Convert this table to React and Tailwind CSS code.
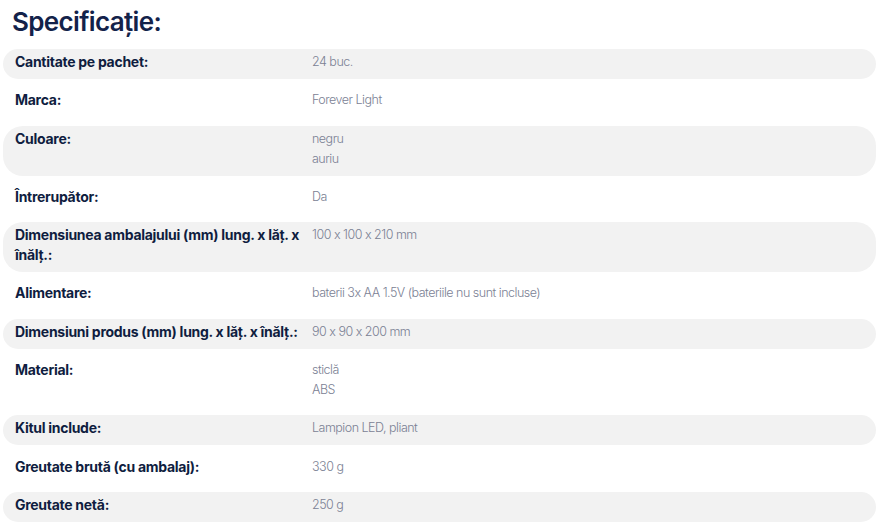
const specs = [
  { label: "Cantitate pe pachet:", values: ["24 buc."] },
  { label: "Marca:", values: ["Forever Light"] },
  { label: "Culoare:", values: ["negru", "auriu"] },
  { label: "Întrerupător:", values: ["Da"] },
  { label: "Dimensiunea ambalajului (mm) lung. x lăț. x înălț.:", values: ["100 x 100 x 210 mm"] },
  { label: "Alimentare:", values: ["baterii 3x AA 1.5V (bateriile nu sunt incluse)"] },
  { label: "Dimensiuni produs (mm) lung. x lăț. x înălț.:", values: ["90 x 90 x 200 mm"] },
  { label: "Material:", values: ["sticlă", "ABS"] },
  { label: "Kitul include:", values: ["Lampion LED, pliant"] },
  { label: "Greutate brută (cu ambalaj):", values: ["330 g"] },
  { label: "Greutate netă:", values: ["250 g"] },
]

export default function App() {
  return (
    <div className="w-[885px] h-[529px] bg-white overflow-hidden font-['Inter',sans-serif]">
      <h2 className="pl-3 pt-[5px] text-[26px] leading-[34px] font-semibold tracking-[-0.025em] text-[#13224a]">
        Specificație:
      </h2>

      {/* spec table */}
      <div className="mt-[10px] ml-[3px] w-[873px] flex flex-col gap-[8.3px]">
        {specs.map((row, i) => (
          <div
            key={row.label}
            className={`flex pl-3 pt-[3px] pb-[7px] rounded-[20px] ${i % 2 === 0 ? "bg-[#f2f2f2]" : ""}`}
          >
            <div className="w-[285px] shrink-0 text-[14px] leading-[20px] font-bold tracking-[-0.02em] text-[#0f1d40]">
              {row.label}
            </div>
            <div className="pl-3 text-[12.5px] leading-[20px] font-light tracking-[-0.04em] text-[#7b8194]">
              {row.values.map((v) => (
                <div key={v}>{v}</div>
              ))}
            </div>
          </div>
        ))}
      </div>
    </div>
  )
}
